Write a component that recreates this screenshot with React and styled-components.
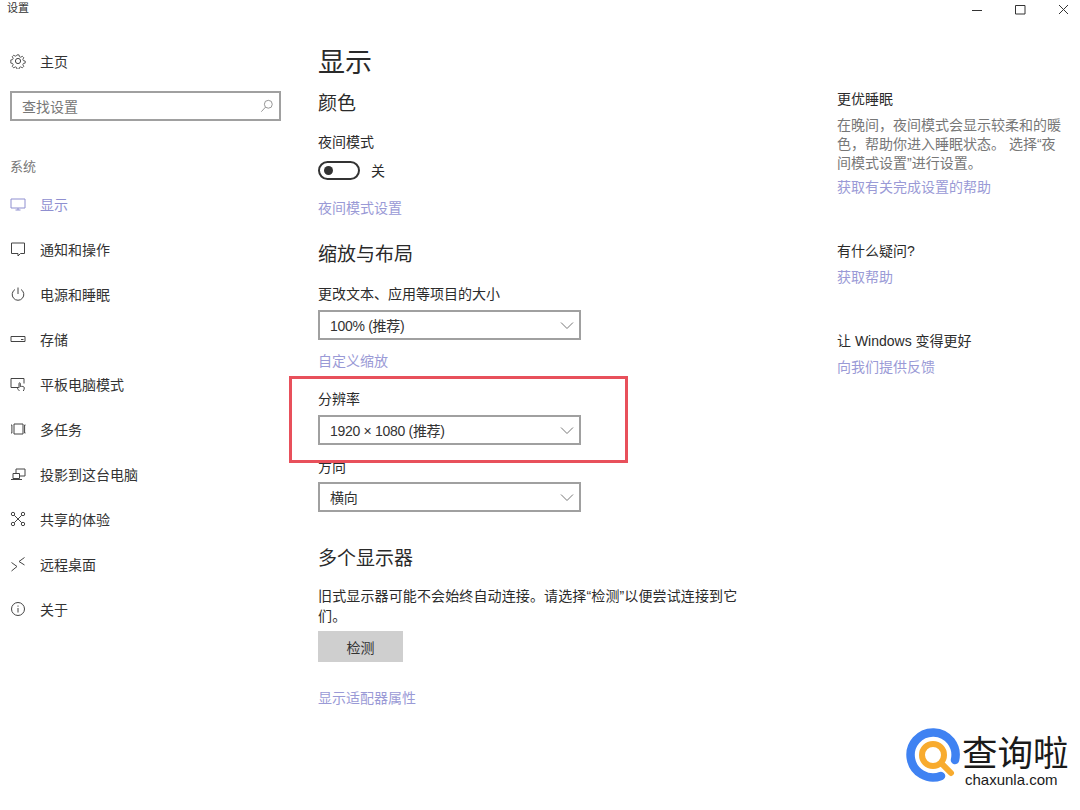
import React from 'react';
import styled, { createGlobalStyle } from 'styled-components';

const Global = createGlobalStyle`
  html, body { margin: 0; padding: 0; background: #fff; }
  body { font-family: "Noto Sans CJK SC", "Liberation Sans", sans-serif; color: #222; }
`;
const FONT = `"Liberation Sans", "Noto Sans CJK SC", sans-serif`;

const Page = styled.div`
  position: relative; width: 1080px; height: 810px; overflow: hidden; background: #fff;
  font-family: ${FONT}; font-size: 14px; color: #2b2b2b;
`;
const TitleBar = styled.div`
  height: 19px; display: flex; justify-content: space-between; align-items: flex-start;
`;
const AppTitle = styled.div`
  font-size: 11px; line-height: 16px; padding-left: 7px; color: #333;
`;
const WinButtons = styled.div`
  display: flex; gap: 28px; padding: 3px 8px 0 0; color: #333;
`;
const Columns = styled.div`
  display: flex; align-items: flex-start;
`;
const Sidebar = styled.nav`
  width: 318px; flex: none; padding: 27px 0 0 10px; box-sizing: border-box;
`;
const NavRow = styled.div`
  height: 30px; display: flex; align-items: center; gap: 14px; margin-bottom: 15px;
  color: ${p => p.$active ? '#8f8fd0' : '#333'}; font-size: 14px;
  svg { flex: none; width: 16px; height: 16px; color: ${p => p.$active ? '#8f8fd0' : '#444'}; }
`;
const Search = styled.div`
  width: 271px; height: 30px; margin-top: 14px; box-sizing: border-box; border: 2px solid #a0a0a0;
  display: flex; align-items: center; justify-content: space-between; padding: 0 5px 0 10px;
  color: #777; font-size: 14px;
  svg { width: 14px; height: 14px; color: #888; }
`;
const SectionLabel = styled.div`
  margin: 36px 0 12px; font-size: 13px; line-height: 20px; color: #777;
`;
const Main = styled.main`
  width: 519px; flex: none; padding-top: 26px;
`;
const PageTitle = styled.h1`
  margin: 0; font-weight: 400; font-size: 27px; line-height: 36px; color: #2a2a2a;
`;
const Heading = styled.h2`
  margin: ${p => p.$mt}px 0 0; font-weight: 400; font-size: 19px; line-height: 26px; color: #2a2a2a;
`;
const Label = styled.div`
  margin-top: ${p => p.$mt}px; font-size: 14px; line-height: 20px; color: #2b2b2b;
`;
const Link = styled.div`
  margin-top: ${p => p.$mt}px; font-size: 14px; line-height: 20px; color: #9a9ad6;
`;
const ToggleRow = styled.div`
  margin-top: 8px; display: flex; align-items: center; gap: 11px; height: 20px; font-size: 14px;
`;
const Toggle = styled.div`
  width: 42px; height: 19px; box-sizing: border-box; border: 2px solid #333; border-radius: 10px;
  display: flex; align-items: center; padding-left: 4px;
`;
const Knob = styled.div`
  width: 9px; height: 9px; border-radius: 50%; background: #333;
`;
const Select = styled.div`
  width: 263px; height: 30px; margin-top: ${p => p.$mt ?? 6}px; box-sizing: border-box;
  border: 2px solid #a0a0a0; display: flex; align-items: center; justify-content: space-between;
  padding: 0 4px 0 10px; font-size: 14px; letter-spacing: -0.3px; color: #333;
  svg { width: 16px; height: 16px; color: #777; }
`;
const Paragraph = styled.p`
  margin: 14px 0 0; width: 425px; font-size: 14px; line-height: 20px; letter-spacing: 0.13px; color: #2b2b2b;
`;
const Detect = styled.div`
  width: 85px; height: 31px; margin-top: 5px; background: #cfcfcf; display: flex;
  align-items: center; justify-content: center; font-size: 14px; color: #333;
`;
const Aside = styled.aside`
  width: 235px; flex: none; padding-top: 70px;
`;
const AsideTitle = styled.div`
  margin-top: ${p => p.$mt ?? 0}px; font-size: 14px; line-height: 20px; color: #2b2b2b;
`;
const AsideText = styled.div`
  margin-top: 7px; width: 226px; font-size: 14px; line-height: 19px; color: #777;
`;
const AsideLink = styled.div`
  margin-top: ${p => p.$mt ?? 6}px; font-size: 14px; line-height: 20px; color: #9a9ad6;
`;
const Highlight = styled.div`
  position: absolute; left: 289px; top: 376px; width: 339px; height: 87px; box-sizing: border-box;
  border: 3px solid #e8505b; pointer-events: none;
`;
const Watermark = styled.div`
  position: absolute; left: 906px; top: 727px; width: 170px; height: 64px; background: #fff;
  display: flex;
  > svg { flex: none; width: 56px; height: 56px; }
`;
const MarkText = styled.div`
  display: flex; flex-direction: column; padding-top: 4px;
`;
const MarkCn = styled.div`
  font-family: "Noto Sans CJK SC", sans-serif; font-size: 35.5px; line-height: 40px; color: #1a1a1a; white-space: nowrap;
`;
const MarkEn = styled.div`
  font-family: "Liberation Sans", sans-serif; font-size: 15px; line-height: 17px; color: #1a1a1a; padding-left: 3px;
`;

const S = ({ children, vb = '0 0 16 16' }) => (
  <svg viewBox={vb} fill="none" stroke="currentColor" strokeWidth="1">{children}</svg>
);
const Icons = {
  gear: <S><circle cx="8" cy="8" r="2.6"/><path d="M6.8 1h2.4l.4 2 1.500.7 1.800-1.100 1.700 1.700-1.100 1.800.7 1.500 2 .4v2.400l-2 .4-.7 1.500 1.100 1.800-1.700 1.700-1.800-1.100-1.500.7-.4 2H6.800l-.4-2-1.500-.7-1.800 1.100-1.700-1.700 1.100-1.800-.7-1.500-2-.4V6.800l2-.4.7-1.500-1.100-1.800 1.700-1.700 1.800 1.100 1.500-.7z" transform="translate(1 1) scale(.875)"/></S>,
  monitor: <S><path d="M1 3h14v9H1zM8 12v2M5.500 14h5"/></S>,
  chat: <S><path d="M1.500 2h13v10.500h-4l-2.500 2.500v-2.500h-6.500z"/></S>,
  power: <S><path d="M8 1.500v6.500M5 3.500a5.800 5.800 0 1 0 6 0"/></S>,
  storage: <S><path d="M1 5.500h14v5H1zM11 8.500h2.500"/></S>,
  tablet: <S><path d="M8 11.500H1V2.500h13v5"/><path d="M9.500 15c-1-1.200-2-2-2-3 0-.6.700-.8 1.500-.2V7.500c0-1 1.300-1 1.300 0v3c1.500-.3 4-.2 4 1.300 0 1.500-.5 2.200-1 3.200"/></S>,
  multi: <S><path d="M4 3h9v10H4zM1 4h.9v8H1M15.500 4h-.9v8h.9"/></S>,
  project: <S><path d="M6 8V3h9v7h-5"/><path d="M3 7.500h6.500v5H3zM1 13.500h11"/></S>,
  share: <S><circle cx="3" cy="3" r="1.700"/><circle cx="13" cy="3" r="1.700"/><circle cx="3" cy="13" r="1.700"/><circle cx="13" cy="13" r="1.700"/><path d="M4.300 4.300l7.400 7.400M11.700 4.300l-7.400 7.400"/></S>,
  remote: <S><path d="M1.500 6.500L7 10.500l-5.500 4.500M14.500 1.500L9 5.500l5.500 3.500"/></S>,
  info: <S><circle cx="8" cy="8" r="6.500"/><path d="M8 7v4.500M8 4.500v1.200"/></S>,
  search: <S><circle cx="9.500" cy="6" r="4.500"/><path d="M6.300 9.300L1.500 14.500"/></S>,
  chevron: <S><path d="M2 5.500l6 6 6-6"/></S>,
};

const nav = [
  ['monitor', '显示', true], ['chat', '通知和操作'], ['power', '电源和睡眠'], ['storage', '存储'],
  ['tablet', '平板电脑模式'], ['multi', '多任务'], ['project', '投影到这台电脑'],
  ['share', '共享的体验'], ['remote', '远程桌面'], ['info', '关于'],
];

export default function App() {
  return (
    <Page>
      <Global />
      <TitleBar>
        <AppTitle>设置</AppTitle>
        <WinButtons>
          <svg width="16" height="12" viewBox="0 0 16 12" fill="none" stroke="currentColor"><path d="M4 7.500h10"/></svg>
          <svg width="16" height="12" viewBox="0 0 16 12" fill="none" stroke="currentColor"><path d="M3.500 2.500h9.500v8.500h-9.500z"/></svg>
          <svg width="16" height="12" viewBox="0 0 16 12" fill="none" stroke="currentColor"><path d="M3 2l9 9M12 2l-9 9"/></svg>
        </WinButtons>
      </TitleBar>
      <Columns>
        <Sidebar>
          <NavRow>{Icons.gear}<span>主页</span></NavRow>
          <Search><span>查找设置</span>{Icons.search}</Search>
          <SectionLabel>系统</SectionLabel>
          {nav.map(([icon, text, active]) => (
            <NavRow key={text} $active={active}>{Icons[icon]}<span>{text}</span></NavRow>
          ))}
        </Sidebar>
        <Main>
          <PageTitle>显示</PageTitle>
          <Heading $mt={10}>颜色</Heading>
          <Label $mt={15}>夜间模式</Label>
          <ToggleRow><Toggle><Knob /></Toggle><span>关</span></ToggleRow>
          <Link $mt={18}>夜间模式设置</Link>
          <Heading $mt={24}>缩放与布局</Heading>
          <Label $mt={16}>更改文本、应用等项目的大小</Label>
          <Select><span>100% (推荐)</span>{Icons.chevron}</Select>
          <Link $mt={11}>自定义缩放</Link>
          <Label $mt={18}>分辨率</Label>
          <Select><span>1920 × 1080 (推荐)</span>{Icons.chevron}</Select>
          <Label $mt={12}>方向</Label>
          <Select $mt={5}><span>横向</span>{Icons.chevron}</Select>
          <Heading $mt={34}>多个显示器</Heading>
          <Paragraph>旧式显示器可能不会始终自动连接。请选择“检测”以便尝试连接到它们。</Paragraph>
          <Detect>检测</Detect>
          <Link $mt={26}>显示适配器属性</Link>
        </Main>
        <Aside>
          <AsideTitle>更优睡眠</AsideTitle>
          <AsideText>在晚间，夜间模式会显示较柔和的暖色，帮助你进入睡眠状态。 选择“夜间模式设置”进行设置。</AsideText>
          <AsideLink $mt={4}>获取有关完成设置的帮助</AsideLink>
          <AsideTitle $mt={44}>有什么疑问?</AsideTitle>
          <AsideLink>获取帮助</AsideLink>
          <AsideTitle $mt={44}>让 Windows 变得更好</AsideTitle>
          <AsideLink>向我们提供反馈</AsideLink>
        </Aside>
      </Columns>
      <Highlight />
      <Watermark>
        <svg viewBox="0 0 56 56" fill="none">
          <path d="M49 33A22.500 22.500 0 1 0 35 49" stroke="#3f82f2" strokeWidth="8.500" strokeLinecap="round"/>
          <circle cx="27" cy="28" r="11" stroke="#f8ab2e" strokeWidth="6"/>
          <path d="M36 37l9 9" stroke="#f8ab2e" strokeWidth="6" strokeLinecap="round"/>
        </svg>
        <MarkText>
          <MarkCn>查询啦</MarkCn>
          <MarkEn>chaxunla.com</MarkEn>
        </MarkText>
      </Watermark>
    </Page>
  );
}
